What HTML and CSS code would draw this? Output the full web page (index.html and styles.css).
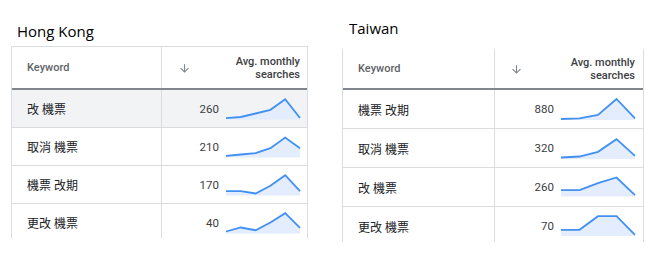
FILE: index.html
```html
<!DOCTYPE html>
<html lang="zh-Hant">
<head>
<meta charset="utf-8">
<title>Keyword comparison</title>
<link rel="stylesheet" href="styles.css">
</head>
<body>
<div class="page">
  <section class="panel panel--hk">
    <h2 class="title">Hong Kong</h2>
    <div class="table table--hk">
      <div class="head">
        <div class="cell cell--kw"><span class="th-kw">Keyword</span></div>
        <div class="cell cell--vol">
          <svg class="sort" viewBox="0 0 24 24" width="13" height="13"><path d="M20 12l-1.41-1.41L13 16.17V4h-2v12.17l-5.58-5.59L4 12l8 8 8-8z"/></svg>
          <span class="th-vol">Avg. monthly<br>searches</span>
        </div>
      </div>
      <div class="row row--hover">
        <div class="cell cell--kw">改 機票</div>
        <div class="cell cell--vol"><span class="num">260</span>
          <svg class="spark" viewBox="0 0 74 22" width="74" height="22"><polygon class="area" points="0,20.2 14.8,19 29.6,15.5 44.4,11.8 59.2,1.2 74,20 74,21.5 0,21.5"/><polyline class="line" points="0,20.2 14.8,19 29.6,15.5 44.4,11.8 59.2,1.2 74,20"/></svg>
        </div>
      </div>
      <div class="row">
        <div class="cell cell--kw">取消 機票</div>
        <div class="cell cell--vol"><span class="num">210</span>
          <svg class="spark" viewBox="0 0 74 22" width="74" height="22"><polygon class="area" points="0,19.8 14.8,18.5 29.6,17.2 44.4,12.2 59.2,1.5 74,12.2 74,21.5 0,21.5"/><polyline class="line" points="0,19.8 14.8,18.5 29.6,17.2 44.4,12.2 59.2,1.5 74,12.2"/></svg>
        </div>
      </div>
      <div class="row">
        <div class="cell cell--kw">機票 改期</div>
        <div class="cell cell--vol"><span class="num">170</span>
          <svg class="spark" viewBox="0 0 74 22" width="74" height="22"><polygon class="area" points="0,17.2 14.8,17.2 29.6,19.5 44.4,11.8 59.2,1.2 74,17.2 74,21.5 0,21.5"/><polyline class="line" points="0,17.2 14.8,17.2 29.6,19.5 44.4,11.8 59.2,1.2 74,17.2"/></svg>
        </div>
      </div>
      <div class="row">
        <div class="cell cell--kw">更改 機票</div>
        <div class="cell cell--vol"><span class="num">40</span>
          <svg class="spark" viewBox="0 0 74 22" width="74" height="22"><polygon class="area" points="0,19.5 14.8,15.5 29.6,18.2 44.4,10.5 59.2,1.2 74,15.8 74,21.5 0,21.5"/><polyline class="line" points="0,19.5 14.8,15.5 29.6,18.2 44.4,10.5 59.2,1.2 74,15.8"/></svg>
        </div>
      </div>
    </div>
  </section>

  <section class="panel panel--tw">
    <h2 class="title">Taiwan</h2>
    <div class="table table--tw">
      <div class="head">
        <div class="cell cell--kw"><span class="th-kw">Keyword</span></div>
        <div class="cell cell--vol">
          <svg class="sort" viewBox="0 0 24 24" width="13" height="13"><path d="M20 12l-1.41-1.41L13 16.17V4h-2v12.17l-5.58-5.59L4 12l8 8 8-8z"/></svg>
          <span class="th-vol">Avg. monthly<br>searches</span>
        </div>
      </div>
      <div class="row">
        <div class="cell cell--kw">機票 改期</div>
        <div class="cell cell--vol"><span class="num">880</span>
          <svg class="spark" viewBox="0 0 74 22" width="74" height="22"><polygon class="area" points="0,21 18.5,20.3 37,17 55.5,1 74,20.3 74,22 0,22"/><polyline class="line" points="0,21 18.5,20.3 37,17 55.5,1 74,20.3"/></svg>
        </div>
      </div>
      <div class="row">
        <div class="cell cell--kw">取消 機票</div>
        <div class="cell cell--vol"><span class="num">320</span>
          <svg class="spark" viewBox="0 0 74 22" width="74" height="22"><polygon class="area" points="0,20.5 18.5,19.5 37,14.8 55.5,2.2 74,18.8 74,22 0,22"/><polyline class="line" points="0,20.5 18.5,19.5 37,14.8 55.5,2.2 74,18.8"/></svg>
        </div>
      </div>
      <div class="row">
        <div class="cell cell--kw">改 機票</div>
        <div class="cell cell--vol"><span class="num">260</span>
          <svg class="spark" viewBox="0 0 74 22" width="74" height="22"><polygon class="area" points="0,14.2 18.5,14.2 37,7.2 55.5,1.5 74,19.2 74,20.5 0,20.5"/><polyline class="line" points="0,14.2 18.5,14.2 37,7.2 55.5,1.5 74,19.2"/></svg>
        </div>
      </div>
      <div class="row">
        <div class="cell cell--kw">更改 機票</div>
        <div class="cell cell--vol"><span class="num">70</span>
          <svg class="spark" viewBox="0 0 74 22" width="74" height="22"><polygon class="area" points="0,14.8 18.5,14.8 37,1.2 55.5,1.2 74,19.8 74,21 0,21"/><polyline class="line" points="0,14.8 18.5,14.8 37,1.2 55.5,1.2 74,19.8"/></svg>
        </div>
      </div>
    </div>
  </section>
</div>
</body>
</html>
```
FILE: styles.css
```css
* { box-sizing: border-box; }

html, body {
  margin: 0;
  padding: 0;
  background: #ffffff;
}

.page {
  display: flex;
  align-items: flex-start;
  gap: 34px;
  padding-left: 11px;
}

.panel {
  display: flex;
  flex-direction: column;
}

.panel--hk { padding-top: 21px; }
.panel--tw { padding-top: 18px; }

.title {
  margin: 0;
  font-family: "Open Sans", "Noto Sans", sans-serif;
  font-weight: 400;
  font-size: 15px;
  line-height: 20px;
  color: #000;
  padding-left: 6px;
}

.panel--hk .title { margin-bottom: 5px; }
.panel--tw .title { margin-bottom: 11px; padding-left: 7px; }

.table {
  border-left: 1px solid #dadce0;
  border-right: 1px solid #dadce0;
  overflow: hidden;
  font-family: Roboto, "Noto Sans CJK TC", sans-serif;
  color: #202124;
}

.table--hk {
  width: 297px;
  height: 192px;
  border-top: 1px solid #dadce0;
}

.table--tw {
  width: 302px;
  height: 193px;
}

.head, .row {
  display: flex;
}

.head {
  border-bottom: 2px solid #80868b;
}

.table--hk .head { height: 43px; }
.table--tw .head { height: 41px; }

.row {
  border-bottom: 1px solid #dadce0;
}

.table--hk .row { height: 38px; }
.table--tw .row { height: 39px; }

.row--hover { background: #f1f3f4; }

.cell {
  display: flex;
  align-items: center;
}

.cell--kw {
  border-right: 1px solid #dadce0;
  padding-left: 15px;
  font-size: 12px;
  color: #202124;
}

.table--hk .cell--kw { width: 150px; }
.table--tw .cell--kw { width: 152px; }

.cell--vol {
  flex: 1;
  justify-content: flex-end;
  gap: 7px;
  padding-right: 7px;
}

.table--tw .cell--vol { padding-right: 8px; }

.head .cell--vol {
  justify-content: space-between;
  padding-left: 16px;
}

.table--tw .head .cell--vol { padding-left: 15px; }

.th-kw {
  font-size: 11px;
  font-weight: 500;
  color: #5f6368;
}

.th-vol {
  font-size: 11px;
  font-weight: 500;
  line-height: 13px;
  color: #3c4043;
  text-align: right;
}

.sort {
  fill: #80868b;
  margin-top: 2px;
}

.num {
  font-size: 11.5px;
  color: #3c4043;
}

.spark {
  display: block;
  overflow: visible;
}

.spark .area {
  fill: #e3edfd;
  stroke: none;
}

.spark .line {
  fill: none;
  stroke: #4190f2;
  stroke-width: 1.8;
  stroke-linejoin: miter;
}
```
